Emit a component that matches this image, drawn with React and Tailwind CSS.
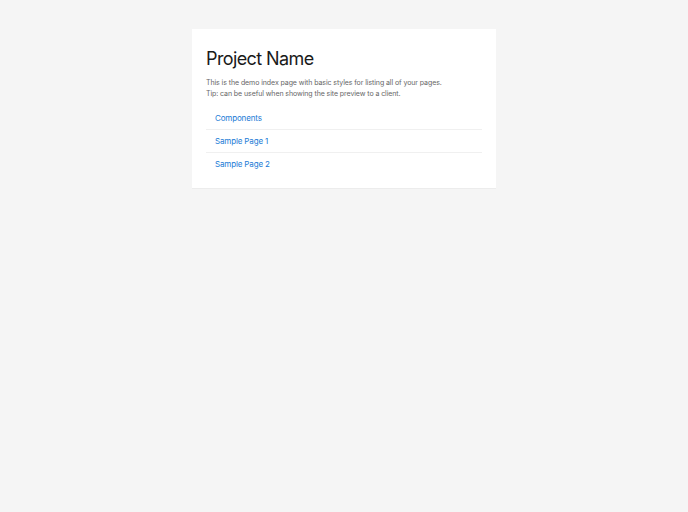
export default function App(){
  var pages=["Components","Sample Page 1","Sample Page 2"];
  return(
    <div className="min-h-[512px] bg-[#f5f5f5] pt-[29px]" style={{fontFamily:"Inter, 'Noto Sans', sans-serif"}}>
      <div className="w-[304px] mx-auto bg-white px-[14px] pt-[19px] pb-[13px] border-b border-[#ececec]">
        <h1 className="text-[18px] leading-[22px] text-[#1a1a1a] font-normal tracking-[-0.6px]">Project Name</h1>
        <p className="mt-[8px] text-[7px] leading-[10.5px] text-[#666] tracking-[-0.08px]">
          This is the demo index page with basic styles for listing all of your pages.<br/>
          Tip: can be useful when showing the site preview to a client.
        </p>
        <ul className="mt-[7px]">
          {pages.map(function(p,i){return(
            <li key={i} className={"h-[23px] flex items-center pl-[9px]"+(i>0?" border-t border-[#f0f0f0]":"")}>
              <a className="text-[8px] text-[#1a7bd6] tracking-[-0.15px]">{p}</a>
            </li>
          );})}
        </ul>
      </div>
    </div>
  );
}
